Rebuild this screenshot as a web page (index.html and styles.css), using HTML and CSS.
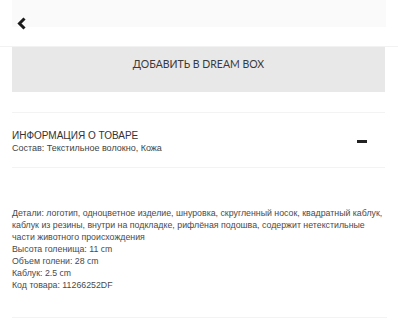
FILE: index.html
```html
<!DOCTYPE html>
<html lang="ru">
<head>
<meta charset="utf-8">
<link rel="stylesheet" href="styles.css">
</head>
<body>
<header class="topbar">
  <div class="ghost"></div>
  <button class="back" aria-label="Назад">
    <svg width="10" height="13" viewBox="0 0 10 13"><path d="M7.5 1.5 L2.5 6.5 L7.5 11.5" fill="none" stroke="#1a1a1a" stroke-width="3" stroke-linejoin="miter"/></svg>
  </button>
</header>
<main class="page">
  <button class="dreambox">ДОБАВИТЬ В DREAM BOX</button>
  <section class="info">
    <div class="info-head">
      <div>
        <h2 class="info-title">ИНФОРМАЦИЯ О ТОВАРЕ</h2>
        <p class="info-sub">Состав: Текстильное волокно, Кожа</p>
      </div>
      <span class="minus"></span>
    </div>
    <div class="details">
      <p>Детали: логотип, одноцветное изделие, шнуровка, скругленный носок, квадратный каблук, каблук из резины, внутри на подкладке, рифлёная подошва, содержит нетекстильные части животного происхождения<br>
      Высота голенища: 11 <span class="unit">cm</span><br>
      Объем голени: 28 <span class="unit">cm</span><br>
      Каблук: 2.5 <span class="unit">cm</span><br>
      Код товара: 11266252DF</p>
    </div>
  </section>
</main>
</body>
</html>
```
FILE: styles.css
```css
* { box-sizing: border-box; }
html, body { margin: 0; padding: 0; background: #fff; }
body {
  width: 398px;
  height: 324px;
  overflow: hidden;
  font-family: "Liberation Sans", Arial, sans-serif;
  color: #333;
}
.topbar {
  position: relative;
  height: 47px;
  border-bottom: 1px solid #f2f2f2;
  padding: 0 12px;
}
.ghost {
  height: 27px;
  background: #fafafa;
}
.back {
  position: absolute;
  left: 17px;
  top: 17px;
  padding: 0;
  border: 0;
  background: none;
  display: block;
  line-height: 0;
}
.page {
  padding: 0 13px 0 12px;
}
.dreambox {
  display: block;
  width: 100%;
  height: 45px;
  border: 0;
  background: #e8e8e8;
  font-family: "Lato", "DejaVu Sans", sans-serif;
  font-size: 10.5px;
  color: #3a3a3a;
  padding: 0 0 12px;
  margin: 0;
}
.info {
  margin-top: 20px;
  border-top: 1px solid #f3f3f3;
}
.info-head {
  display: flex;
  align-items: center;
  justify-content: space-between;
  padding: 16px 18px 13px 0;
  border-bottom: 1px solid #f3f3f3;
}
.info-title {
  margin: 0;
  font-weight: normal;
  font-size: 10px;
  line-height: 13px;
  color: #333;
}
.info-sub {
  margin: 1px 0 0;
  font-size: 9px;
  line-height: 11px;
  color: #444;
}
.minus {
  width: 10px;
  height: 3px;
  background: #222;
}
.details {
  padding: 39px 0 26px;
  margin-right: -2px;
  border-bottom: 1px solid #f3f3f3;
}
.details p {
  margin: 0;
  font-size: 8.8px;
  line-height: 12px;
  color: #4a4a4a;
}
.unit {
  font-family: "Lato", "DejaVu Sans", sans-serif;
}
```
